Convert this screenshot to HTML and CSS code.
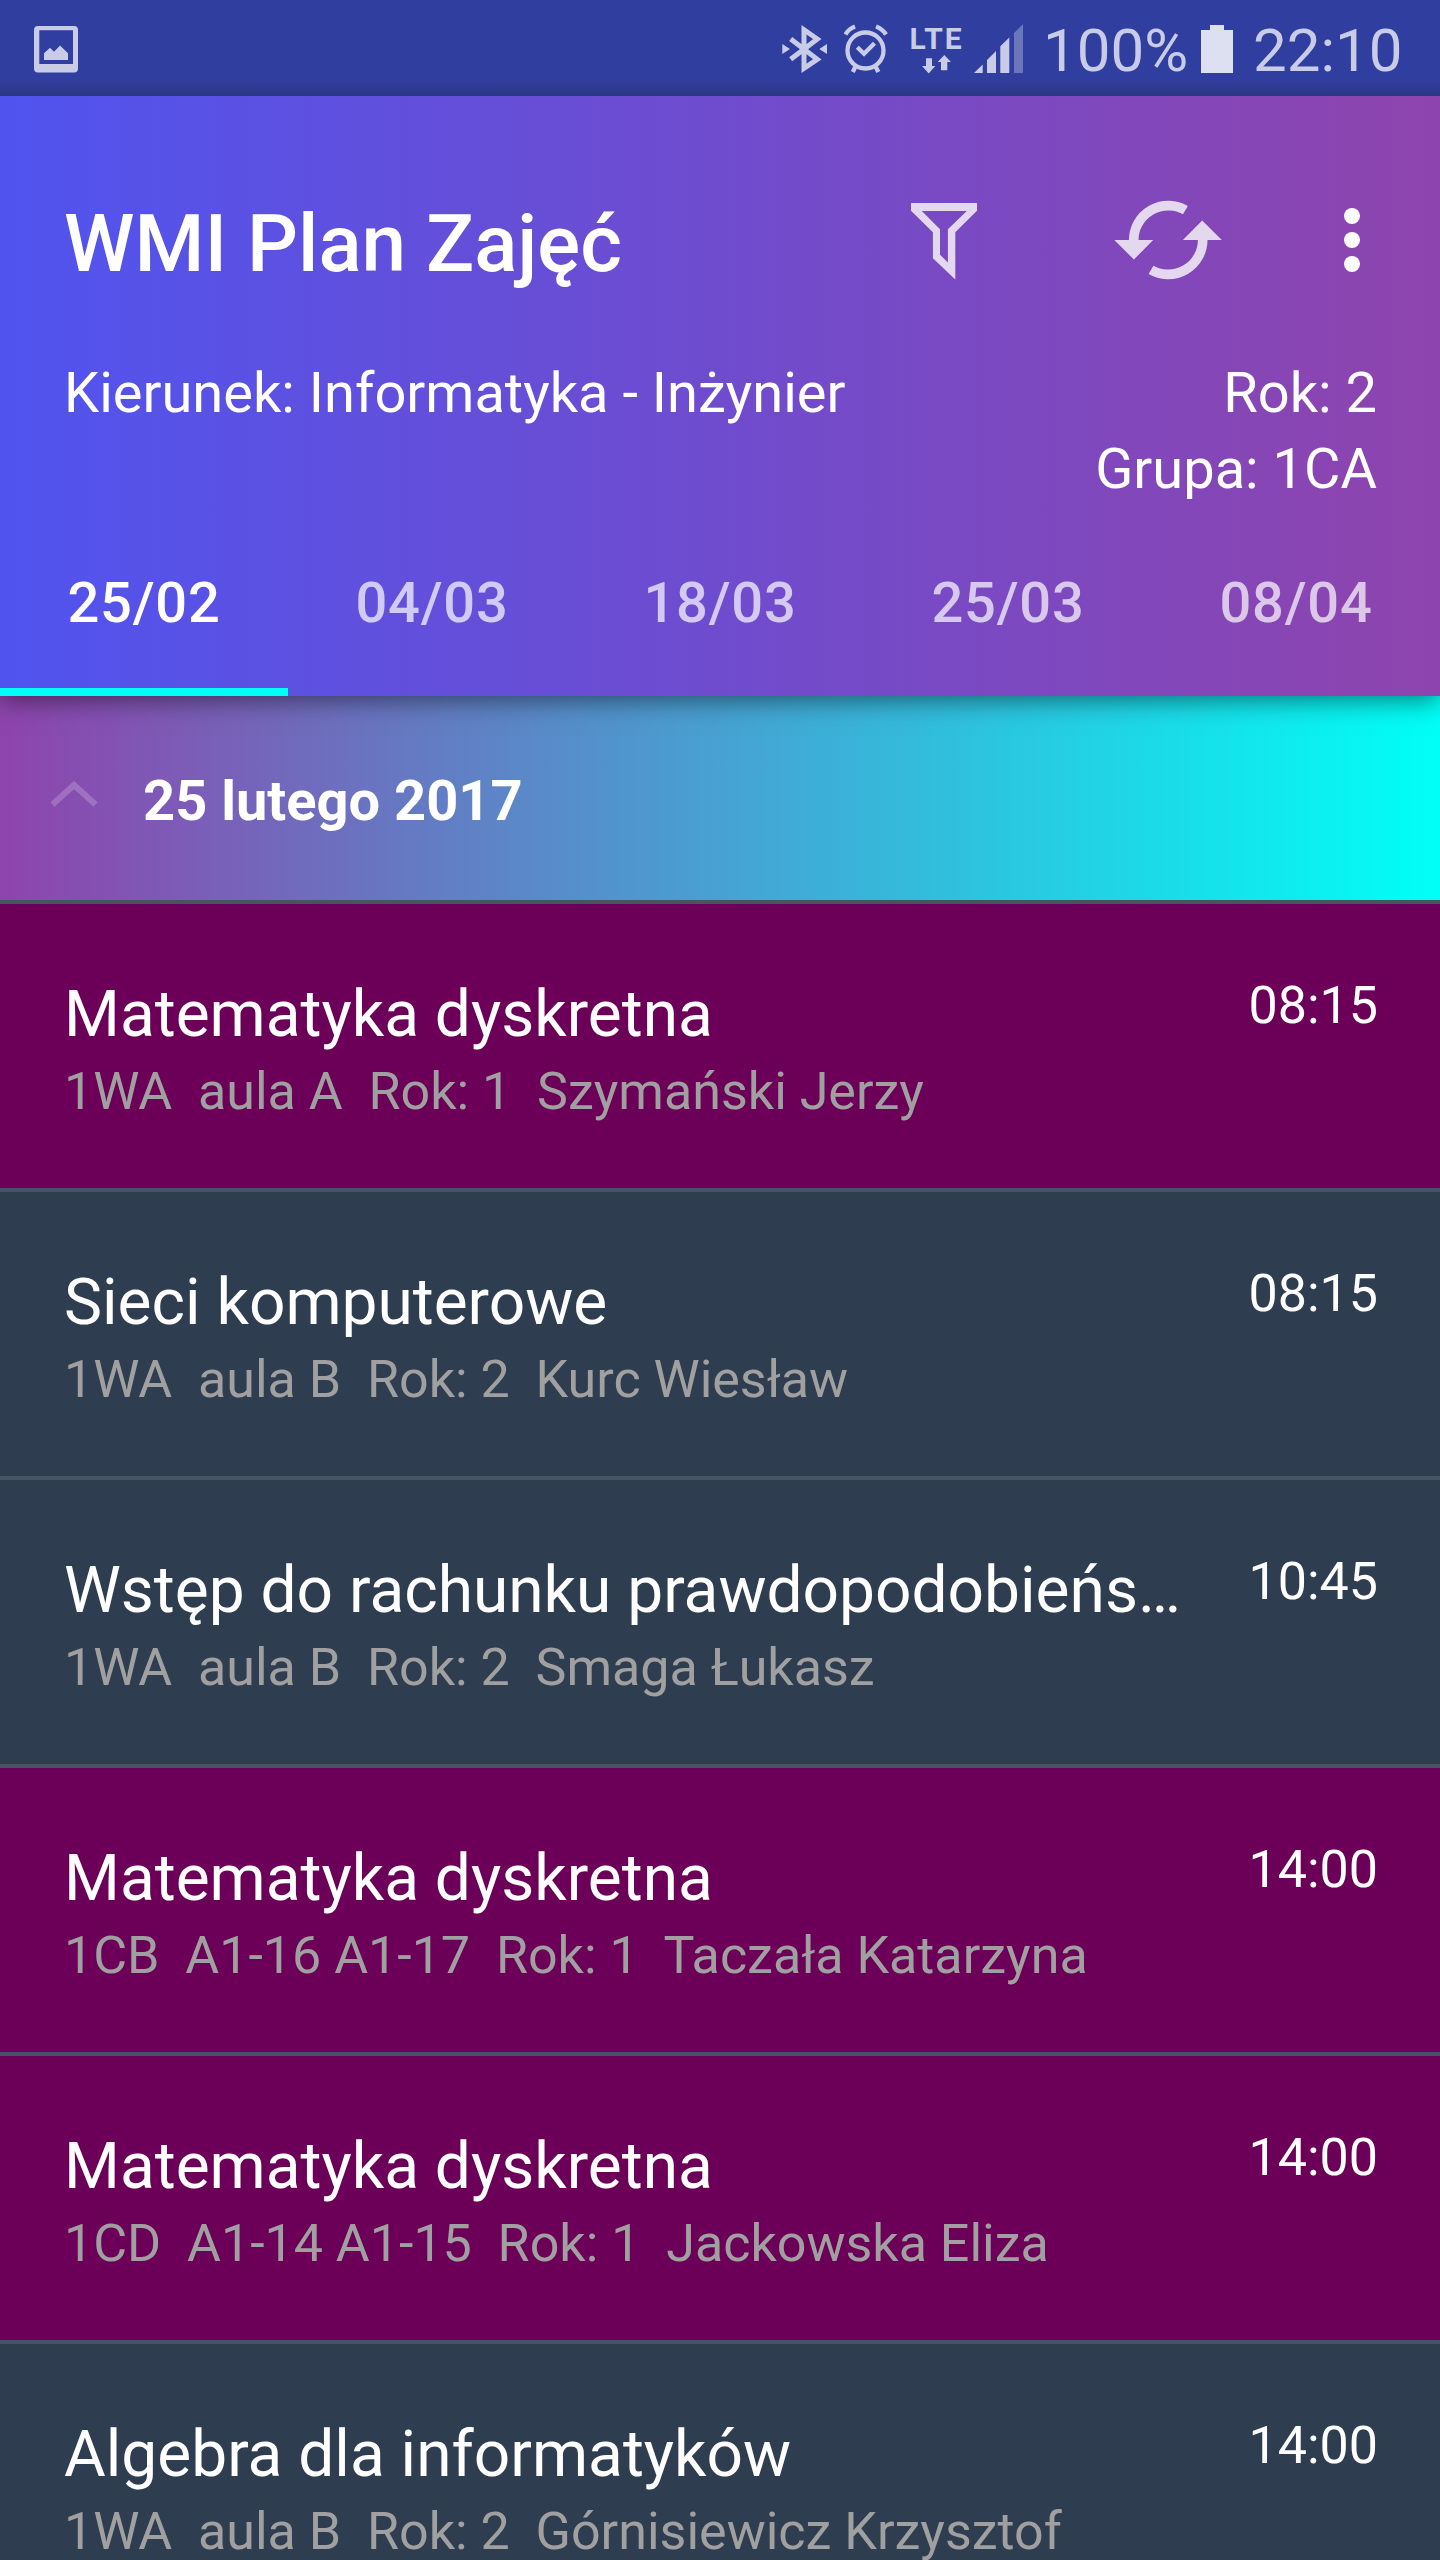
FILE: index.html
```html
<!DOCTYPE html>
<html lang="pl">
<head>
<meta charset="utf-8">
<title>WMI Plan Zajęć</title>
<link rel="stylesheet" href="styles.css">
</head>
<body>
<div class="status">
  <svg class="photo" width="44" height="96" viewBox="34 0 44 96"><path fill-rule="evenodd" d="M38 26H74a4 4 0 0 1 4 4V68.500a4 4 0 0 1-4 4H38a4 4 0 0 1-4-4V30a4 4 0 0 1 4-4zM39.300 30.300V64H73V30.300z"/><path d="M44 60V53.300L50 47.700L54 51.700L60 45.500L68 53.300V60z"/></svg>
  <svg class="bluetooth" width="46" height="96" viewBox="782 0 46 96"><path d="M782.300 44L790 49L782.300 54zM827 44L819.300 49L827 54z"/><path class="line w5" d="M790.700 39L817.300 59.300L804 68.300V29.700L817.300 39L790.700 59.300"/></svg>
  <svg class="alarm" width="44" height="96" viewBox="844 0 44 96"><circle class="line w4" cx="865.500" cy="50.500" r="18"/><path class="line w4" d="M857.300 47.300L864 53.800L874.500 43.300M855.700 66L852.800 72M875.300 66L878.300 72M845.500 34.500Q848.500 29 855 26.500M886 34.500Q882.500 29 876 26.500"/></svg>
  <svg class="lte" width="52" height="96" viewBox="910 0 52 96"><text x="909.500" y="49" textLength="52">LTE</text><path d="M926 58.300H932V66H935.300L928.700 73.500L922 66H926zM941 70.300V62H937.700L944.300 55L951 62H947.300V70.300z"/></svg>
  <svg class="signal" width="49" height="96" viewBox="974 0 49 96"><path d="M974 73L982.700 64.500V73zM987 73V60L996 51V73zM1000.300 73V46.300L1009.300 37.500V73z"/><path opacity=".4" d="M1014 73V33L1023 24.300V73z"/></svg>
  <span class="percent">100%</span>
  <svg class="battery" width="32" height="96" viewBox="1201 0 32 96"><path d="M1201 30H1210V25H1224V30H1233V73H1201z"/></svg>
  <span class="clock">22:10</span>
</div>

<header class="header">
  <div class="toolbar">
    <h1 class="title">WMI Plan Zajęć</h1>
    <svg class="filter" width="66" height="80" viewBox="911 200 66 80"><path fill-rule="evenodd" d="M911 203H977V210.700L955.300 232.300V279.500L932.900 258.300V232.300L911 210.700zM921.800 211L940 229.300V254.700L947.900 262.500V229.300L966.800 211z"/></svg>
    <svg class="refresh" width="108" height="80" viewBox="1114 200 108 80"><path d="M1114.300 240H1153.200L1133.900 259.500zM1182.900 240H1221.800L1202.200 220.500z"/><path class="line w9" d="M1133.700 241V240A34.500 34.500 0 0 1 1185.400 210.200M1202.700 239V240A34.500 34.500 0 0 1 1151 269.800"/></svg>
    <svg class="more" width="16" height="80" viewBox="0 0 16 80"><circle cx="8" cy="16" r="8"/><circle cx="8" cy="40" r="8"/><circle cx="8" cy="64" r="8"/></svg>
  </div>
  <div class="info">
    <div>Kierunek: Informatyka - Inżynier</div>
    <div class="group">Rok: 2<br>Grupa: 1CA</div>
  </div>
  <nav class="tabs">
    <a class="tab active">25/02</a>
    <a class="tab">04/03</a>
    <a class="tab">18/03</a>
    <a class="tab">25/03</a>
    <a class="tab">08/04</a>
  </nav>
</header>

<main>
  <div class="day">
    <svg class="chevron" width="48" height="26" viewBox="0 0 48 26"><path d="M2.500 23.500L24 4L45.500 23.500"/></svg>
    <span>25 lutego 2017</span>
  </div>
  <div class="row mine"><div><div class="name">Matematyka dyskretna</div><div class="meta">1WA  aula A  Rok: 1  Szymański Jerzy</div></div><div class="time">08:15</div></div>
  <div class="row"><div><div class="name">Sieci komputerowe</div><div class="meta">1WA  aula B  Rok: 2  Kurc Wiesław</div></div><div class="time">08:15</div></div>
  <div class="row"><div><div class="name">Wstęp do rachunku prawdopodobieńs…</div><div class="meta">1WA  aula B  Rok: 2  Smaga Łukasz</div></div><div class="time">10:45</div></div>
  <div class="row mine"><div><div class="name">Matematyka dyskretna</div><div class="meta">1CB  A1-16 A1-17  Rok: 1  Taczała Katarzyna</div></div><div class="time">14:00</div></div>
  <div class="row mine"><div><div class="name">Matematyka dyskretna</div><div class="meta">1CD  A1-14 A1-15  Rok: 1  Jackowska Eliza</div></div><div class="time">14:00</div></div>
  <div class="row"><div><div class="name">Algebra dla informatyków</div><div class="meta">1WA  aula B  Rok: 2  Górnisiewicz Krzysztof</div></div><div class="time">14:00</div></div>
</main>
</body>
</html>
```
FILE: styles.css
```css
* { box-sizing: border-box; }

body {
  margin: 0;
  width: 1440px;
  height: 2560px;
  overflow: hidden;
  background: #2e3d4f;
  color: #fff;
  font-family: Roboto, sans-serif;
}

svg { display: block; flex: none; }

/* status bar */
.status {
  display: flex;
  height: 96px;
  padding-left: 34px;
  background: linear-gradient(#303e9f 80px, #2b3785 96px);
  color: #c8cce6;
  fill: #c8cce6;
  font-size: 60px;
  line-height: 102px;
}
.line { fill: none; stroke: #c8cce6; }
.w4 { stroke-width: 4.3px; }
.w5 { stroke-width: 5px; }
.bluetooth { margin-left: 704px; }
.alarm { margin-left: 16px; }
.lte { margin-left: 22px; }
.lte text { font-size: 30px; font-weight: 700; }
.signal { margin-left: 12px; }
.percent { margin-left: 20px; width: 158px; }
.battery { fill: #dde0f0; }
.clock { margin-left: 20px; }

/* app header */
.header {
  position: relative;
  height: 600px;
  background: linear-gradient(90deg, #5054ef, #8e44ad);
  box-shadow: 0 4px 24px rgba(0, 0, 0, .5);
  clip-path: inset(0 0 -40px 0);
}
.toolbar {
  display: flex;
  align-items: center;
  height: 259px;
  padding: 29px 80px 0 64px;
}
.title {
  margin: 0;
  width: 847px;
  padding-top: 8px;
  font-size: 80px;
  font-weight: 500;
  line-height: 96px;
}
.filter, .refresh { fill: #e4d8ef; }
.refresh { margin-left: 137px; }
.w9 { stroke: #e4d8ef; stroke-width: 9.600px; }
.more { margin-left: 122px; fill: #fff; }
.info {
  display: flex;
  justify-content: space-between;
  height: 152px;
  padding: 0 63px 0 64px;
  font-size: 56px;
  line-height: 76px;
}
.group { text-align: right; }
.tabs { display: flex; height: 189px; }
.tab {
  width: 288px;
  padding-top: 58px;
  color: rgba(255, 255, 255, .7);
  font-size: 56px;
  font-weight: 500;
  letter-spacing: .8px;
  line-height: 76px;
  text-align: center;
}
.active { color: #fff; border-bottom: 8px solid #00fff7; }

/* timetable */
.day {
  display: flex;
  align-items: center;
  gap: 45px;
  height: 204px;
  padding: 6px 0 0 50px;
  background: linear-gradient(90deg, #8e44ad, #00fff7);
  font-size: 56px;
  font-weight: 700;
}
.chevron {
  margin-top: -14px;
  fill: none;
  stroke: rgba(255, 255, 255, .2);
  stroke-width: 6px;
}
.row {
  display: flex;
  justify-content: space-between;
  height: 288px;
  padding: 72px 62px 0 64px;
  border-top: 4px solid #455565;
  white-space: pre;
}
.mine { background: #6c0058; }
.name { padding-top: 1px; font-size: 64px; line-height: 76px; }
.meta { margin-top: 1px; color: #a0a0a0; font-size: 52px; line-height: 76px; }
.time { font-size: 52px; line-height: 60px; }
```
